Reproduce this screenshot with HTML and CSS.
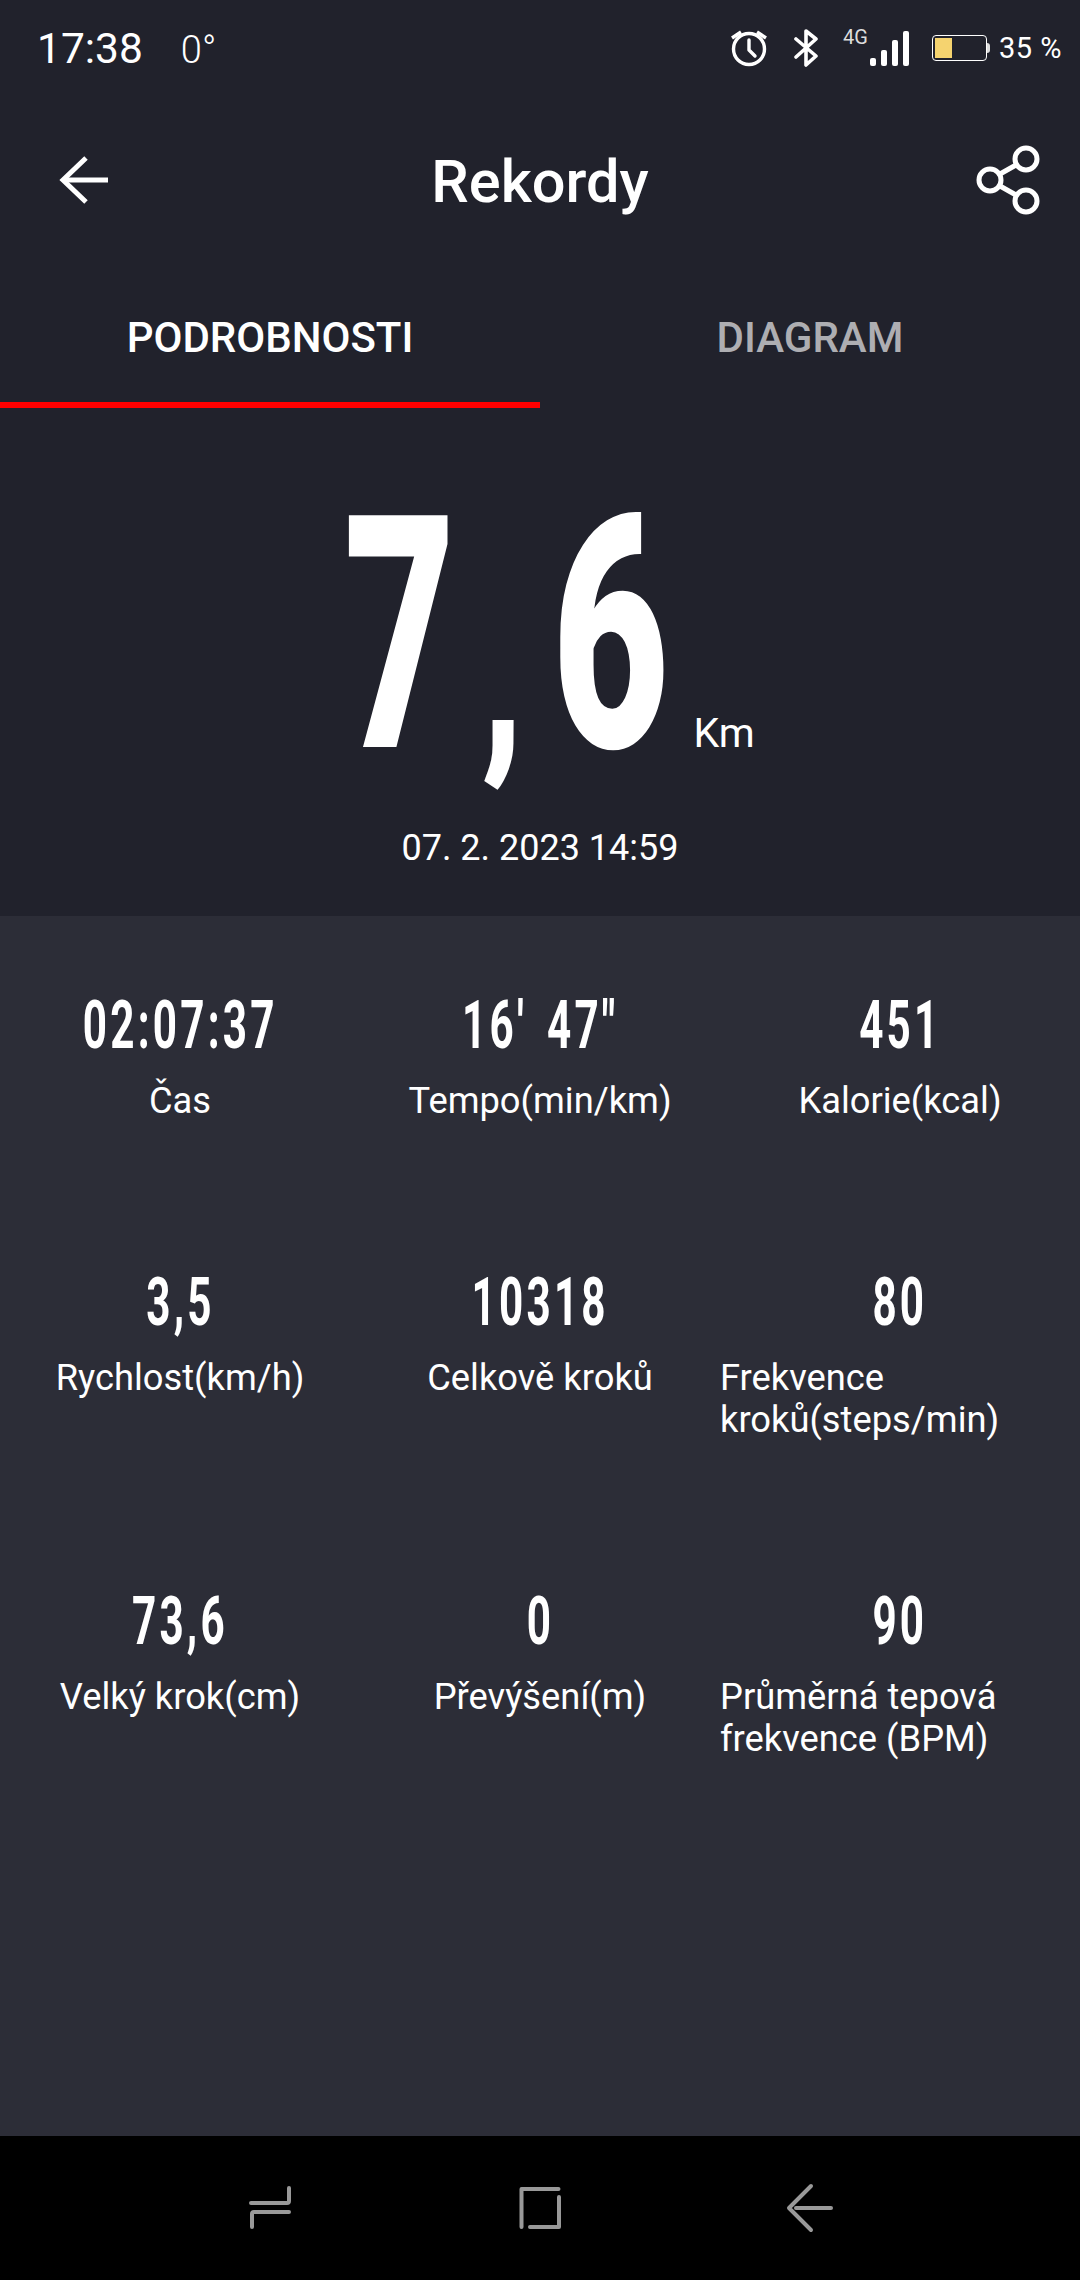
FILE: index.html
```html
<!DOCTYPE html>
<html lang="cs">
<head>
<meta charset="utf-8">
<title>Rekordy</title>
<link rel="stylesheet" href="styles.css">
</head>
<body>
<div class="app">
  <header class="top">
    <div class="status">
      <div class="status-left">
        <span class="clock">17:38</span>
        <span class="temp">0°</span>
      </div>
      <div class="status-right">
        <svg class="ic-alarm" width="38" height="38" viewBox="0 0 38 38" fill="none" stroke="#fff" stroke-width="3.4">
          <circle cx="19" cy="20" r="15.5"/>
          <path d="M19 11v10l6 6" stroke-linecap="round" stroke-linejoin="round"/>
          <path d="M2 9l9-6M36 9l-9-6"/>
        </svg>
        <svg class="ic-bt" width="24" height="38" viewBox="0 0 24 38" fill="none" stroke="#fff" stroke-width="3.6" stroke-linejoin="round" stroke-linecap="round">
          <path d="M2 10l20 17-10 9V2l10 8-20 18"/>
        </svg>
        <div class="net">
          <span class="net-label">4G</span>
          <div class="bars">
            <i class="bar b1"></i><i class="bar b2"></i><i class="bar b3"></i><i class="bar b4"></i>
          </div>
        </div>
        <div class="battery">
          <div class="batt-body"><div class="batt-fill"></div></div>
          <div class="batt-nub"></div>
        </div>
        <span class="pct">35 %</span>
      </div>
    </div>
    <div class="toolbar">
      <div class="tb-left">
        <svg width="50" height="48" viewBox="0 0 50 48" fill="none" stroke="#fff" stroke-width="5">
          <path d="M49 24H4"/>
          <path d="M27 2L4 24l23 22"/>
        </svg>
      </div>
      <h1 class="title">Rekordy</h1>
      <div class="tb-right">
        <svg width="64" height="72" viewBox="0 0 64 72" fill="none" stroke="#fff" stroke-width="5">
          <circle cx="50" cy="15" r="11"/>
          <circle cx="14" cy="36" r="11"/>
          <circle cx="50" cy="57" r="11"/>
          <path d="M24 30l16-9M24 42l16 9"/>
        </svg>
      </div>
    </div>
    <nav class="tabs">
      <div class="tab active">PODROBNOSTI</div>
      <div class="tab">DIAGRAM</div>
    </nav>
  </header>

  <section class="hero">
    <div class="distance">
      <div class="big"><span class="glyph g-seven">7</span><span class="glyph g-comma">,</span><span class="glyph g-six">6</span></div>
      <span class="unit">Km</span>
    </div>
    <div class="date">07. 2. 2023 14:59</div>
  </section>

  <main class="stats">
    <div class="cell"><div class="val"><span>02:07:37</span></div><div class="lbl">Čas</div></div>
    <div class="cell"><div class="val"><span>16' 47"</span></div><div class="lbl">Tempo(min/km)</div></div>
    <div class="cell"><div class="val"><span>451</span></div><div class="lbl">Kalorie(kcal)</div></div>
    <div class="cell"><div class="val"><span>3,5</span></div><div class="lbl">Rychlost(km/h)</div></div>
    <div class="cell"><div class="val"><span>10318</span></div><div class="lbl">Celkově kroků</div></div>
    <div class="cell"><div class="val"><span>80</span></div><div class="lbl">Frekvence kroků(steps/min)</div></div>
    <div class="cell"><div class="val"><span>73,6</span></div><div class="lbl">Velký krok(cm)</div></div>
    <div class="cell"><div class="val"><span>0</span></div><div class="lbl">Převýšení(m)</div></div>
    <div class="cell"><div class="val"><span>90</span></div><div class="lbl">Průměrná tepová frekvence (BPM)</div></div>
  </main>

  <footer class="navbar">
    <svg width="60" height="60" viewBox="0 0 60 60" fill="none" stroke="#999" stroke-width="4" stroke-linecap="round" stroke-linejoin="round">
      <path d="M11 25h36a2 2 0 0 0 2-2V10"/>
      <path d="M12 49V36a2 2 0 0 1 2-2h35"/>
    </svg>
    <svg width="60" height="60" viewBox="0 0 60 60" fill="none" stroke="#999" stroke-width="4" stroke-linecap="round" stroke-linejoin="round">
      <path d="M11.500 49V11h37"/>
      <path d="M49 19v30H20"/>
    </svg>
    <svg width="60" height="60" viewBox="0 0 60 60" fill="none" stroke="#999" stroke-width="4" stroke-linecap="round" stroke-linejoin="round">
      <path d="M31 8L9 30l22 22" />
      <path d="M16 30h35"/>
    </svg>
  </footer>
</div>
</body>
</html>
```
FILE: styles.css
```css
* { box-sizing: border-box; }
html, body { margin: 0; padding: 0; background: #000; }
body { font-family: Roboto, "Noto Sans", sans-serif; color: #fff; }
.app { width: 1080px; height: 2280px; display: flex; flex-direction: column; overflow: hidden; }

.top { background: #21222c; }
.status { height: 96px; display: flex; justify-content: space-between; align-items: center; padding: 0 18px 0 37px; }
.status-left { display: flex; align-items: baseline; gap: 38px; }
.clock { font-size: 42.5px; }
.temp { font-size: 38px; font-weight: 300; }
.status-right { display: flex; align-items: center; }
.ic-alarm { margin-right: 26px; }
.ic-bt { margin-right: 52px; }
.net { position: relative; width: 40px; height: 36px; margin-right: 22px; }
.net-label { position: absolute; left: -27px; top: -3px; font-size: 20px; line-height: 20px; color: #ddd; }
.bars { display: flex; align-items: flex-end; gap: 5px; height: 36px; }
.bar { display: block; width: 6px; background: #fff; border-radius: 2px; }
.b1 { height: 8px; } .b2 { height: 16px; } .b3 { height: 26px; } .b4 { height: 35px; }
.battery { display: flex; align-items: center; margin-right: 9px; }
.batt-body { width: 55px; height: 26px; border: 1.5px solid #fff; border-radius: 4px; padding: 2px; }
.batt-fill { width: 17px; height: 100%; background: #f5d36f; }
.batt-nub { width: 3px; height: 10px; background: #ddd; border-radius: 0 3px 3px 0; }
.pct { font-size: 29px; letter-spacing: .5px; }

.toolbar { height: 168px; display: grid; grid-template-columns: 1fr auto 1fr; align-items: center; }
.tb-left { padding-left: 59px; display: flex; }
.tb-right { padding-right: 40px; display: flex; justify-content: flex-end; }
.title { margin: 0; font-size: 59.5px; font-weight: 500; line-height: 72px; padding-top: 4px; }

.tabs { display: flex; height: 144px; }
.tab { flex: 1; display: flex; justify-content: center; align-items: center; font-size: 42px; font-weight: 500; color: #aeaeb2; padding: 2px 0 0; }
.tab.active { color: #fff; border-bottom: 6px solid #f00; padding: 8px 0 0; }

.hero { height: 508px; background: #21222c; display: flex; flex-direction: column; align-items: center; }
.distance { display: flex; align-items: baseline; padding: 63px 0 0 19px; height: 355px; }
.big { width: 349px; display: flex; align-items: baseline; font-size: 326px; font-weight: 900; line-height: 330px; white-space: nowrap; }
.glyph { display: block; transform-origin: left center; }
.g-seven { width: 137px; transform: scaleX(.59); }
.g-comma { width: 76px; font-size: 220px; transform: scaleX(.72); }
.g-six { width: 136px; transform: translateX(-5px) scaleX(.62); }
.unit { font-size: 41px; }
.date { font-size: 36px; margin-top: 64px; }

.stats { flex: 1; background: #2c2d37; display: grid; grid-template-columns: repeat(3, 360px); grid-auto-rows: min-content; padding-top: 77px; }
.cell { display: flex; flex-direction: column; align-items: center; padding-bottom: 148px; }
.val { font-size: 66px; line-height: 66px; font-weight: 700; height: 66px; margin-bottom: 21px; }
.val span { display: inline-block; transform: scaleX(.64); letter-spacing: 5px; word-spacing: 10px; white-space: nowrap; }
.lbl { font-size: 36.3px; line-height: 42px; }

.navbar { height: 144px; background: #000; display: flex; align-items: center; justify-content: space-between; padding: 0 240px; }
```
